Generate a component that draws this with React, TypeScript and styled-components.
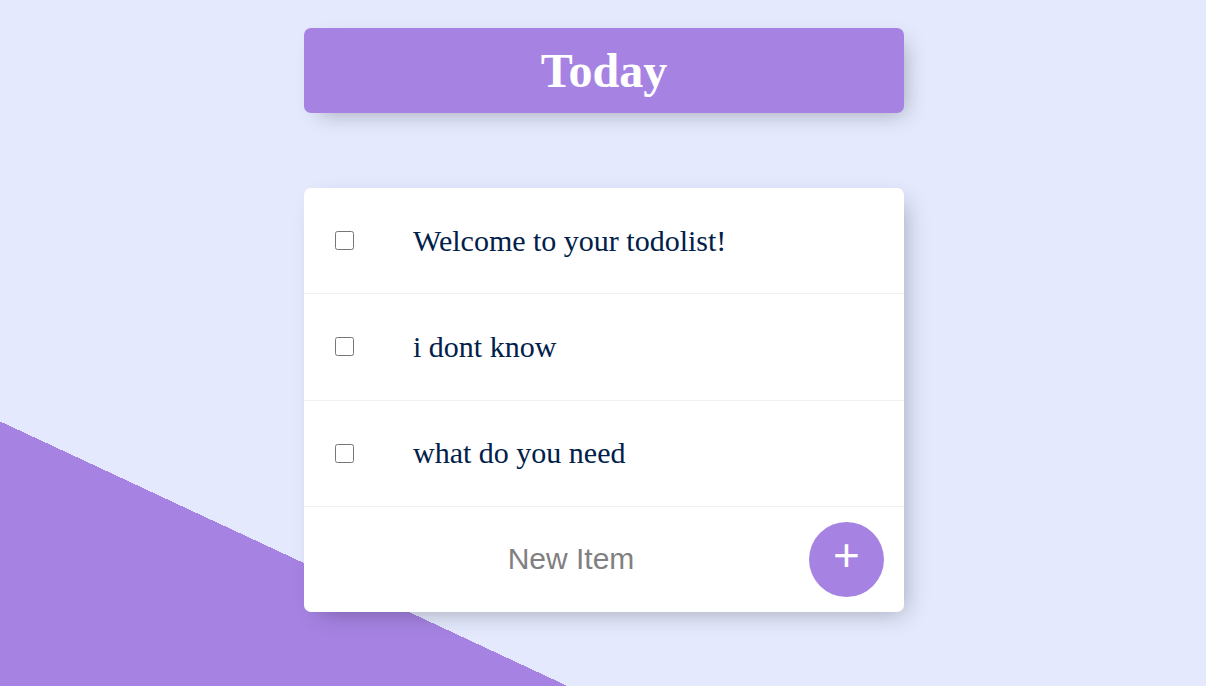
import React from "react";
import styled, { createGlobalStyle } from "styled-components";

const Global = createGlobalStyle`
  html, body { margin: 0; padding: 0; }
  body { background: #E4E9FD; }
`;

const Page = styled.div`
  width: 1206px;
  height: 686px;
  overflow: hidden;
  background-color: #E4E9FD;
  background-image: linear-gradient(25deg, #A683E3 21.2%, #E4E9FD 21.2%);
  display: flex;
  flex-direction: column;
  align-items: center;
  padding: 28px 0 0 2px;
  box-sizing: border-box;
  gap: 75px;
  font-family: "Liberation Serif", "Times New Roman", serif;
`;

const Card = styled.div<{ $accent?: boolean }>`
  width: 600px;
  background: ${(p) => (p.$accent ? "#A683E3" : "#ffffff")};
  border-radius: 7px;
  box-shadow: 7.5px 7.5px 22.5px -7.5px rgba(0, 0, 0, 0.3);
  overflow: hidden;
`;

const Title = styled.h1`
  margin: 0;
  padding: 15px;
  text-align: center;
  color: #ffffff;
  font-size: 48px;
  line-height: 55px;
  font-weight: 700;
`;

const Item = styled.div`
  min-height: 106.3px;
  display: flex;
  align-items: center;
  border-bottom: 1px solid #F1F1F1;
  box-sizing: border-box;
  &:last-child { border-bottom: 0; min-height: 105px; }
`;

const Check = styled.input`
  width: 19px;
  height: 19px;
  margin: 0 30px 0 31px;
  flex: none;
`;

const Label = styled.p`
  margin: 0;
  padding: 30px 30px 30px 29px;
  font-size: 30px;
  color: #00204a;
`;

const Form = styled.form`
  display: flex;
  align-items: center;
  margin-left: 32px;
  gap: 3px;
`;

const TextInput = styled.input`
  width: 470px;
  height: 90px;
  border: none;
  padding: 0;
  text-align: center;
  font-family: "Liberation Sans", Arial, sans-serif;
  font-size: 30px;
  outline: none;
  &::placeholder { color: grey; opacity: 1; }
`;

const AddButton = styled.button`
  width: 75px;
  height: 75px;
  border-radius: 50%;
  border: 0;
  background: #A683E3;
  color: #ffffff;
  font-family: "Liberation Sans", Arial, sans-serif;
  font-size: 46px;
  font-weight: 400;
  line-height: 1;
  padding: 0 0 9px 0;
  display: flex;
  align-items: center;
  justify-content: center;
`;

const items = ["Welcome to your todolist!", "i dont know", "what do you need"];

export default function App() {
  return (
    <>
      <Global />
      <Page>
        <Card $accent>
          <Title>Today</Title>
        </Card>
        <Card>
          {items.map((t) => (
            <Item key={t}>
              <Check type="checkbox" />
              <Label>{t}</Label>
            </Item>
          ))}
          <Item>
            <Form onSubmit={(e) => e.preventDefault()}>
              <TextInput type="text" placeholder="New Item" />
              <AddButton type="submit">+</AddButton>
            </Form>
          </Item>
        </Card>
      </Page>
    </>
  );
}
